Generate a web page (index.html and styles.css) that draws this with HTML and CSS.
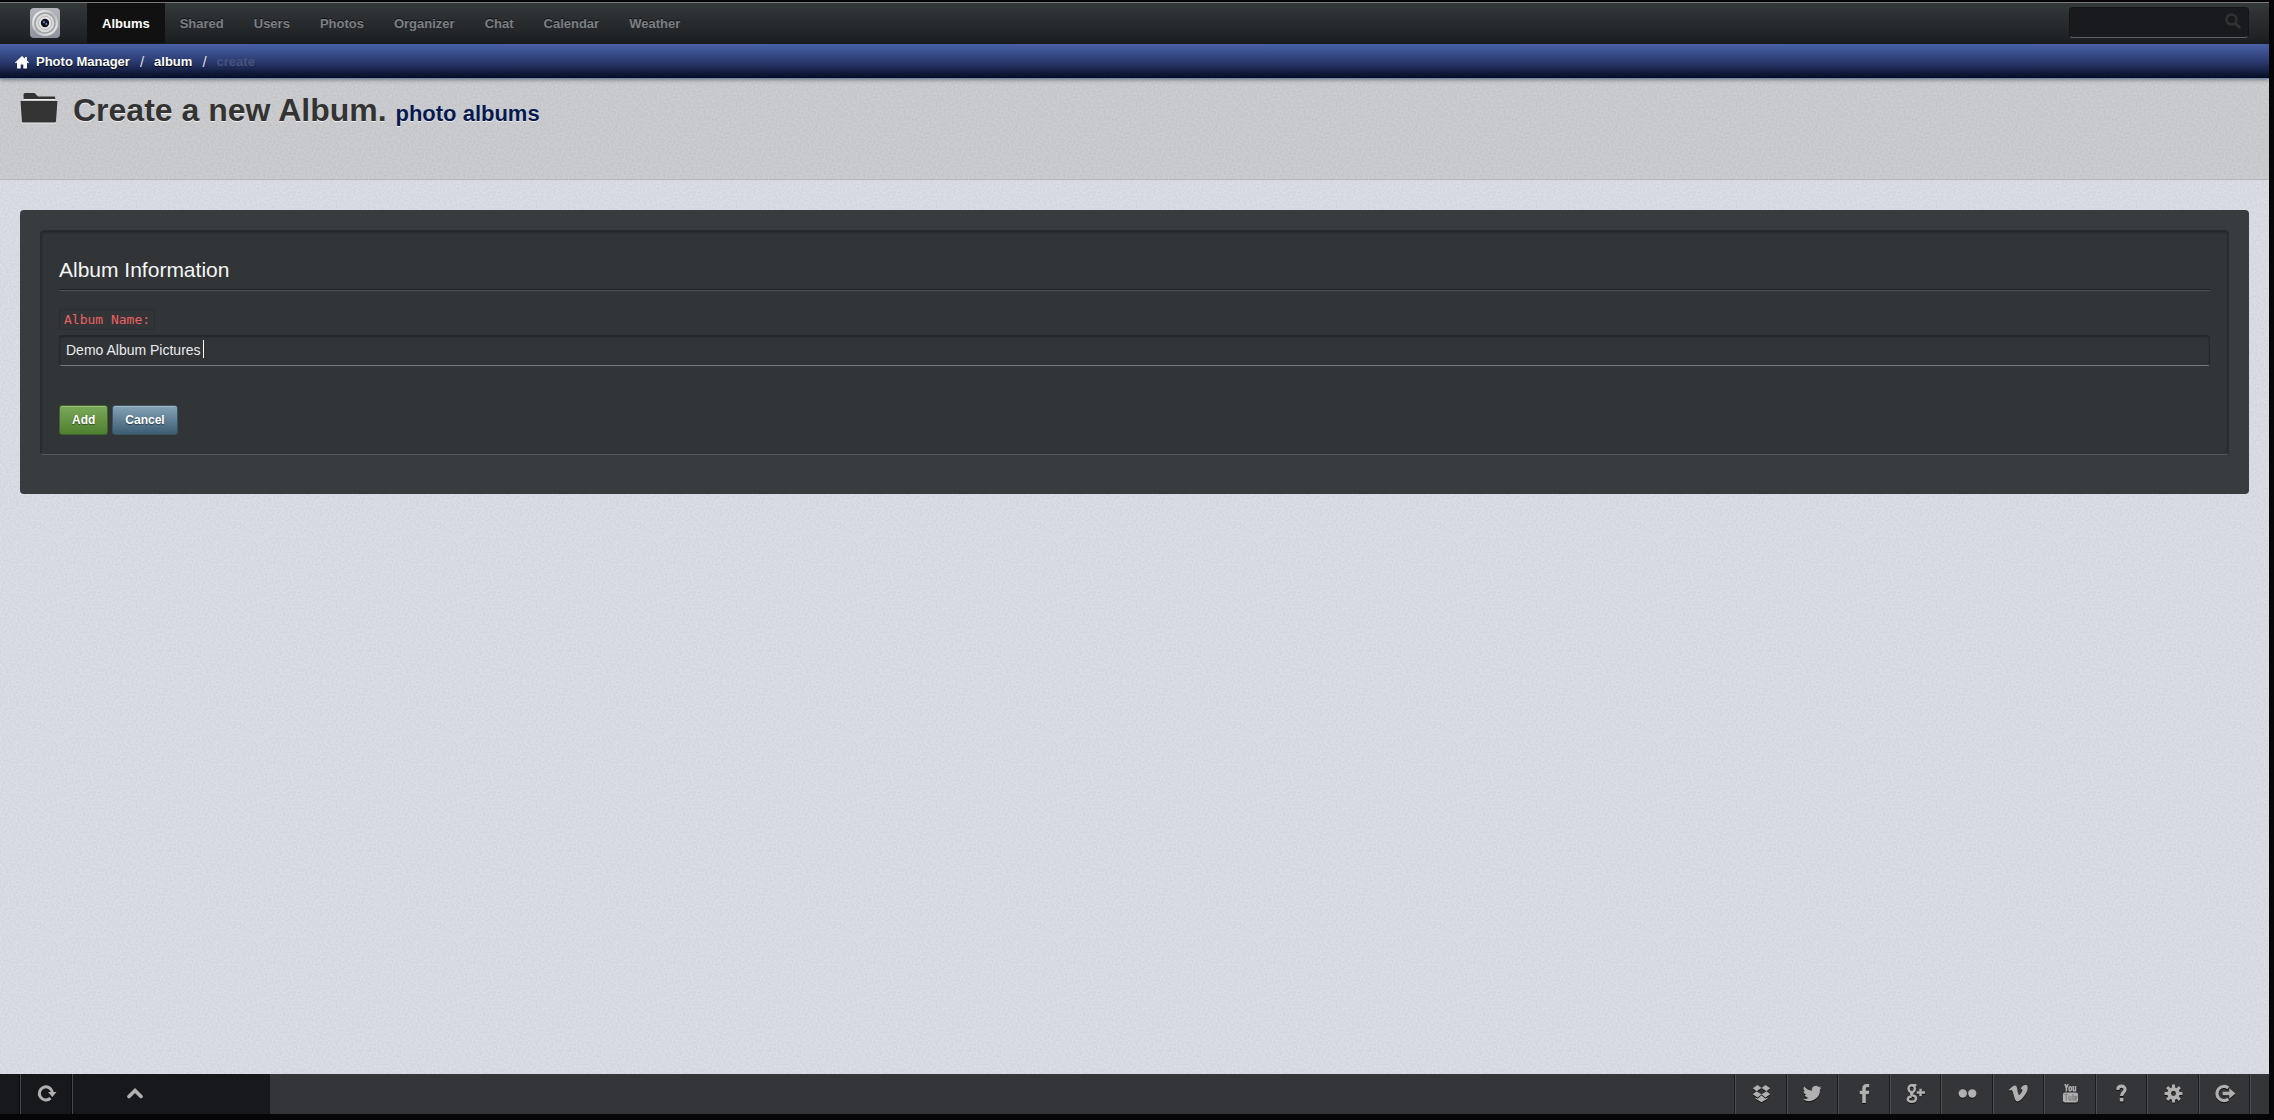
FILE: index.html
```html
<!DOCTYPE html>
<html lang="en">
<head>
    <meta charset="UTF-8">
    <meta name="viewport" content="width=device-width, initial-scale=1.0">
    <title>Photo Manager</title>
    <link rel="stylesheet" href="styles.css">
</head>
<body>
    <nav class="navbar">
        <a href="#" class="brand" aria-label="Photo Manager">
            <svg width="30" height="30" viewBox="0 0 30 30">
                <defs>
                    <linearGradient id="plate" x1="0" y1="0" x2="0" y2="1">
                        <stop offset="0" stop-color="#b4b7bd"/>
                        <stop offset="1" stop-color="#8d939c"/>
                    </linearGradient>
                    <linearGradient id="ring" x1="0" y1="0" x2="1" y2="1">
                        <stop offset="0" stop-color="#ffffff"/>
                        <stop offset="0.5" stop-color="#b9bbbd"/>
                        <stop offset="1" stop-color="#f4f4f4"/>
                    </linearGradient>
                </defs>
                <rect width="30" height="30" rx="4" fill="url(#plate)"/>
                <circle cx="15" cy="15" r="13" fill="url(#ring)"/>
                <circle cx="15" cy="15" r="10" fill="#d9d9d9" stroke="#9fa0a1" stroke-width="1.5"/>
                <circle cx="15" cy="15" r="6.5" fill="#e8e8e8" stroke="#b5b5b5"/>
                <circle cx="15" cy="15" r="4.2" fill="#10131f"/>
                <circle cx="14" cy="14" r="1.3" fill="#5868a8"/>
                <circle cx="16.3" cy="16" r="1" fill="#7f8bb8"/>
            </svg>
        </a>
        <ul class="menu">
            <li><a href="#" class="active">Albums</a></li>
            <li><a href="#">Shared</a></li>
            <li><a href="#">Users</a></li>
            <li><a href="#">Photos</a></li>
            <li><a href="#">Organizer</a></li>
            <li><a href="#">Chat</a></li>
            <li><a href="#">Calendar</a></li>
            <li><a href="#">Weather</a></li>
        </ul>
        <form class="search">
            <input type="text" aria-label="Search">
            <svg width="16" height="16" viewBox="0 0 16 16"><circle cx="6.5" cy="6.5" r="5" fill="none" stroke="#2f3133" stroke-width="2.6"/><path d="M10.3 10.3l4 4" stroke="#2f3133" stroke-width="3" stroke-linecap="round"/></svg>
        </form>
    </nav>

    <ul class="breadcrumb">
        <li>
            <a href="#">
                <svg width="14" height="13" viewBox="0 0 14 13"><path fill="#fff" d="M7 0L0 6.400l.8.900L2 6.400V12.500h3.700V8.500h2.600v4H12V6.400l1.200.9.800-.9-2.100-1.900V1H10v1.700z"/></svg>
                Photo Manager
            </a>
        </li>
        <li><a href="#">album</a></li>
        <li class="current">create</li>
    </ul>

    <header class="page-header">
        <svg width="38" height="31" viewBox="0 0 38 31"><path fill="#333" d="M3.500 7V2.500Q3.500 1 5 1h9.500l3.500 3.500h16q1.200 0 1.200 1.200V7zM.5 9h37L36 29.500q-.1 1-1.200 1H3q-1 0-1.100-1z"/></svg>
        <h1>Create a new Album. <small>photo albums</small></h1>
    </header>

    <main>
        <section class="panel">
            <form class="well">
                <h2>Album Information</h2>
                <label for="albumName">Album Name:</label>
                <div class="field">
                    <input type="text" id="albumName" value="Demo Album Pictures">
                    <span class="caret"></span>
                </div>
                <div class="actions">
                    <button type="submit" class="btn add">Add</button>
                    <button type="button" class="btn cancel">Cancel</button>
                </div>
            </form>
        </section>
    </main>

    <footer class="toolbar">
        <div class="tools">
            <a href="#" aria-label="Refresh"><svg width="20" height="18" viewBox="0 0 20 18"><path d="M13.500 14.200A6.600 6.600 0 1 1 15.400 8" fill="none" stroke="#b0b0b0" stroke-width="3"/><path d="M11 8h8.500l-4.200 5z" fill="#b0b0b0"/></svg></a>
            <a href="#" class="up" aria-label="Up"><svg width="16" height="12" viewBox="0 0 16 12"><path d="M2 9.500l6-6 6 6" fill="none" stroke="#b0b0b0" stroke-width="3.600" stroke-linecap="round"/></svg></a>
        </div>
        <div class="social">
            <a href="#" aria-label="Dropbox"><svg viewBox="0 0 20 20"><path d="M5.800 1L10 4.300 4.800 7.700.8 4.600zM14.200 1L10 4.300l5.200 3.400 4-3.100zM.8 10.800l4-3.100L10 11l-4.200 3.200zM19.200 10.800l-4-3.100L10 11l4.200 3.200zM10 12l4.300 3.400 2-1.300v1.400L10 19.200l-6.300-3.700v-1.400l2 1.300z"/></svg></a>
            <a href="#" aria-label="Twitter"><svg viewBox="0 0 24 24"><path d="M23.500 4.600c-.9.400-1.800.7-2.800.8 1-.6 1.800-1.600 2.200-2.700-1 .6-2 1-3.100 1.200a4.900 4.900 0 0 0-8.400 4.500C7.300 8.200 3.700 6.200 1.300 3.200.1 5.300.7 8 2.800 9.500c-.8 0-1.500-.2-2.200-.6 0 2.300 1.600 4.400 3.900 4.900-.7.200-1.500.2-2.200.1.600 2 2.400 3.400 4.600 3.400A9.900 9.900 0 0 1 0 19.300 14 14 0 0 0 21.500 7c.8-.6 1.500-1.400 2-2.400z"/></svg></a>
            <a href="#" aria-label="Facebook"><svg viewBox="0 0 20 20"><path d="M15 .2v3.300h-2c-1.300 0-1.600.7-1.600 1.700v2H15l-.5 3.500h-3.100V20H7.600v-9.300H5V7.200h2.600V4.700C7.600 1.800 9.400 0 12.200 0c1.300 0 2.500.1 2.800.2z"/></svg></a>
            <a href="#" aria-label="Google Plus"><svg viewBox="0 0 20 20"><g fill="none" stroke="#b0b0b0" stroke-width="2.600"><ellipse cx="6" cy="5" rx="3.300" ry="3.700"/><path d="M6 1.300h5M8 8.500c-4 1.500-3 3 0 3.800 4 1.300 3 6.400-2 6.400-5.500 0-5.500-5 0-5.600M15.300 5v8M11.300 9H20"/></g></svg></a>
            <a href="#" aria-label="Flickr"><svg viewBox="0 0 20 20"><circle cx="5" cy="10" r="4.400"/><circle cx="15" cy="10" r="4.400"/></svg></a>
            <a href="#" aria-label="Vimeo"><svg viewBox="0 0 24 24"><path d="M23.500 6.400c-.1 2.300-1.700 5.400-4.800 9.400-3.200 4.200-5.900 6.200-8.100 6.200-1.400 0-2.500-1.300-3.500-3.800L5.200 11.300C4.500 8.800 3.700 7.500 2.900 7.500c-.2 0-.8.400-1.800 1L0 7.200l3.400-3C5 2.800 6.100 2.100 6.900 2c1.900-.2 3 1.100 3.400 3.800.9 5.800 1.600 8.100 2.600 8.100 1.300-.2 4.700-5.500 3.900-6.600-.4-.8-1.200-.7-2.300-.3 1.200-4 3.600-6 7-5.800 1.700 0 2.200 1.700 2 5.200z"/></svg></a>
            <a href="#" aria-label="YouTube"><svg viewBox="0 0 20 20"><path d="M4.200 0l1.500 4.500V8M7.400 0L5.700 4.500" fill="none" stroke="#b0b0b0" stroke-width="1.700"/><rect x="8.500" y="2.800" width="2.300" height="4.500" rx="1" fill="none" stroke="#b0b0b0" stroke-width="1.600"/><path d="M12.800 2.200v4.500q.6 1.200 2.300 0M15.200 2.200V8" fill="none" stroke="#b0b0b0" stroke-width="1.700"/><rect x="2" y="9" width="16" height="10.500" rx="2.500"/><path d="M3.800 11h3.500M5.500 11v6.500M8.400 12.500v4.200h2M10.500 12.500v5M12.500 10.500v6.600h1.400v-4h-1.200M17 15h-1.600v-2.200H17v1.500M15.400 15v2.200H17" fill="none" stroke="#6a6c6e" stroke-width=".8"/></svg></a>
            <a href="#" aria-label="Help"><svg viewBox="0 0 20 20"><path d="M6 6.200C6.500 1 14 1.200 13.700 6c-.2 3-3.600 3-3.600 6.500" fill="none" stroke="#b0b0b0" stroke-width="3.400"/><rect x="8.200" y="14.800" width="3.800" height="3.600" rx=".5"/></svg></a>
            <a href="#" aria-label="Settings"><svg viewBox="0 0 20 20"><circle cx="10" cy="10" r="4.600" fill="none" stroke="#b0b0b0" stroke-width="4"/><path d="M10 .6v4M10 15.400v4M.6 10h4M15.400 10h4M3.300 3.300l3 3M13.700 13.700l3 3M3.300 16.700l3-3M13.700 6.300l3-3" stroke="#b0b0b0" stroke-width="3.200"/></svg></a>
            <a href="#" aria-label="Log out"><svg class="wide" viewBox="0 0 22 20"><path d="M14.500 4.200A7.400 7.400 0 1 0 14.500 15.800" fill="none" stroke="#b0b0b0" stroke-width="3.400"/><path d="M8.500 8.200h7V4.500L22 10l-6.500 5.500v-3.700h-7z"/></svg></a>
        </div>
    </footer>
</body>
</html>
```
FILE: styles.css
```css
:root {
    --grain: url("data:image/svg+xml,%3Csvg xmlns='http://www.w3.org/2000/svg' width='200' height='200'%3E%3Cfilter id='n' x='0' y='0' width='1' height='1' color-interpolation-filters='sRGB'%3E%3CfeTurbulence type='fractalNoise' baseFrequency='.5' numOctaves='3' stitchTiles='stitch'/%3E%3CfeColorMatrix values='3 0 0 0 -1 3 0 0 0 -1 3 0 0 0 -1 0 0 0 0 1'/%3E%3C/filter%3E%3Crect width='200' height='200' filter='url(%23n)' opacity='.035'/%3E%3C/svg%3E");
}

* {
    margin: 0;
    padding: 0;
    box-sizing: border-box;
}

body {
    display: flex;
    flex-direction: column;
    min-height: 100vh;
    padding: 2px 5px 6px 0;
    background-color: #060609;
    font-family: "Liberation Sans", Arial, sans-serif;
    font-size: 13px;
    line-height: 20px;
}

a {
    text-decoration: none;
}

ul {
    list-style-type: none;
}

/* Top navigation */
.navbar {
    display: flex;
    align-items: stretch;
    height: 42px;
    padding-right: 20px;
    border-top: 1px solid #77797b;
    background: linear-gradient(#33383b, #1b1e20);
}

.brand {
    padding: 5px 27px 0 30px;
}

.brand svg {
    display: block;
}

.menu {
    display: flex;
    flex-grow: 1;
}

.menu a {
    display: block;
    height: 40px;
    padding: 11px 15px 9px;
    color: #7b8084;
    font-weight: bold;
    text-shadow: 0 -1px 0 #111;
}

.menu a.active {
    background-color: #111;
    color: #fff;
}

.search {
    position: relative;
    padding-top: 4px;
}

.search input {
    display: block;
    width: 180px;
    height: 31px;
    padding: 4px 32px 4px 8px;
    border: 1px solid #141517;
    border-bottom-color: #5f6264;
    border-radius: 4px;
    outline: none;
    background-color: #191a1d;
    color: #fff;
}

.search svg {
    position: absolute;
    top: 10px;
    right: 8px;
}

/* Breadcrumb */
.breadcrumb {
    position: relative;
    display: flex;
    height: 35px;
    padding: 8px 15px 6px;
    border-bottom: 1px solid #6c8bad;
    background: linear-gradient(#4961a7, #2c3c73 50%, #060d24);
    box-shadow: 0 1px 4px rgba(0, 0, 0, 0.4);
    font-weight: bold;
}

.breadcrumb li {
    display: flex;
    align-items: center;
}

.breadcrumb a {
    display: flex;
    align-items: center;
    gap: 7px;
    color: #fff;
    text-shadow: 0 1px 1px #000;
}

.breadcrumb li + li::before {
    content: "/";
    padding: 0 10px;
    color: #ddd;
    font-weight: normal;
    font-size: 15px;
}

.breadcrumb .current {
    color: #47537b;
}

/* Page header */
.page-header {
    display: flex;
    align-items: flex-start;
    gap: 15px;
    height: 101px;
    padding: 11px 20px;
    border-bottom: 1px solid #b5b7ba;
    background: #c9cbce var(--grain);
}

.page-header svg {
    margin-top: 2px;
    filter: drop-shadow(0 1px 0 #eee);
}

.page-header h1 {
    color: #333;
    font-size: 32px;
    line-height: 40px;
    text-shadow: 0 1px 0 #eee;
}

.page-header small {
    color: #06194f;
    font-size: 22px;
}

/* Content */
main {
    flex-grow: 1;
    padding: 30px 20px;
    background: #dadde6 var(--grain);
}

.panel {
    padding: 20px 20px 39px;
    border-radius: 4px;
    background-color: #383c3f;
}

.well {
    padding: 19px 18px;
    border: 1px solid #292c2e;
    border-bottom-color: #55595b;
    border-radius: 4px;
    background-color: #323537;
    box-shadow: inset 0 1px 3px rgba(0, 0, 0, 0.4);
}

.well h2 {
    height: 40px;
    margin-bottom: 19px;
    border-bottom: 1px solid #1f2122;
    box-shadow: 0 1px 0 #4c5052;
    color: #f5f5f5;
    font-size: 21px;
    font-weight: normal;
    line-height: 40px;
}

.well label {
    display: inline-block;
    height: 21px;
    padding: 0 4px;
    border: 1px solid #2b2e30;
    border-radius: 3px;
    color: #ee6064;
    font-family: "DejaVu Sans Mono", monospace;
    font-size: 13px;
    line-height: 19px;
    vertical-align: top;
}

.field {
    position: relative;
    margin-top: 5px;
}

.field input {
    display: block;
    width: 100%;
    height: 31px;
    padding: 4px 6px 6px;
    border: 1px solid #25282a;
    border-bottom-color: #777a7c;
    border-radius: 3px;
    outline: none;
    background-color: #313436;
    box-shadow: inset 0 1px 2px rgba(0, 0, 0, 0.3);
    color: #e8ebef;
    font-family: inherit;
    font-size: 14px;
}

.caret {
    position: absolute;
    top: 5px;
    left: 144px;
    width: 1px;
    height: 18px;
    background-color: #fff;
}

.actions {
    display: flex;
    gap: 4px;
    margin-top: 39px;
}

.btn {
    height: 30px;
    padding: 0 12px;
    border: 1px solid #3d672a;
    border-radius: 3px;
    color: #fff;
    font-family: inherit;
    font-size: 12px;
    font-weight: bold;
    text-shadow: 0 1px 1px rgba(0, 0, 0, 0.5);
    box-shadow: inset 0 1px 0 rgba(255, 255, 255, 0.25);
    cursor: pointer;
}

.add {
    background: linear-gradient(#7ba95a, #4e802f);
}

.cancel {
    border-color: #3b5363;
    background: linear-gradient(#85a3b6, #3d5d73);
}

/* Bottom toolbar */
.toolbar {
    display: flex;
    justify-content: space-between;
    height: 40px;
    background-color: #343538;
}

.tools,
.social {
    display: flex;
}

.tools {
    width: 270px;
    padding-left: 20px;
    background-color: #17181b;
}

.toolbar a {
    display: flex;
    align-items: center;
    justify-content: center;
    width: 52px;
    padding-bottom: 2px;
    border-left: 1px solid #43464a;
    box-shadow: -1px 0 0 #0b0c0d;
}

.tools .up {
    width: 125px;
}

.social {
    width: 534px;
    padding-right: 18px;
}

.social::after {
    content: "";
    border-left: 1px solid #4b4d50;
    box-shadow: -1px 0 0 #1b1c1e;
}

.social a {
    flex: 1;
    border-left-color: #4b4d50;
    box-shadow: -1px 0 0 #1b1c1e;
}

.social svg {
    width: 19px;
    height: 19px;
    fill: #b0b0b0;
    filter: drop-shadow(0 1px 0 #111);
}

.social .wide {
    width: 22px;
}
```
